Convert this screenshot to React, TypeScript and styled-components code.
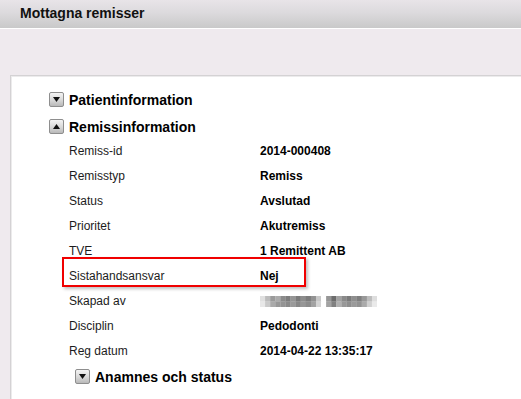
import React from "react";
import styled, { createGlobalStyle } from "styled-components";

const Global = createGlobalStyle`
  html, body { margin: 0; padding: 0; }
  body {
    background: #efeaee;
    font-family: "Liberation Sans", Arial, sans-serif;
    overflow: hidden;
  }
`;

const Page = styled.div`
  width: 521px;
  height: 399px;
  display: flex;
  flex-direction: column;
  overflow: hidden;
`;

const Header = styled.header`
  height: 29px;
  box-sizing: border-box;
  border-bottom: 1px solid #ffffff;
  padding-left: 20px;
  background: linear-gradient(#e8e4e8 0%, #dcdadd 45%, #c9c9c9 100%);
`;

const Title = styled.h1`
  margin: 0;
  font-size: 14px;
  font-weight: bold;
  line-height: 26px;
  color: #111;
`;

const Spacer = styled.div`
  height: 46px;
  flex: none;
`;

const Panel = styled.main`
  flex: 1;
  margin-left: 10px;
  background: #ffffff;
  border-top: 1px solid #d4d2d4;
  border-left: 1px solid #d4d2d4;
  box-shadow: inset 1px 1px 0 #ecebec;
  padding: 12px 0 0 38px;
`;

const SectionHead = styled.div<{ $indent?: number; $gap?: number; $top?: number }>`
  display: flex;
  align-items: center;
  height: 24px;
  margin-left: ${(p) => p.$indent ?? 0}px;
  margin-bottom: ${(p) => p.$gap ?? 0}px;
  margin-top: ${(p) => p.$top ?? 0}px;
  gap: 5px;
`;

const HeadText = styled.span`
  font-size: 14px;
  font-weight: bold;
  line-height: 24px;
  color: #000;
`;

const ToggleBtn = styled.span`
  width: 15px;
  height: 15px;
  box-sizing: border-box;
  border: 1px solid #8e8e8e;
  border-radius: 2px;
  background: linear-gradient(#f4f4f4 0%, #d8d8d8 55%, #b9b9b9 100%);
  display: flex;
  align-items: center;
  justify-content: center;
  flex: none;
  margin-top: -1px;
`;

const Toggle = ({ open }: { open?: boolean }) => (
  <ToggleBtn>
    <svg width="9" height="7" viewBox="0 0 9 7">
      {open ? (
        <polygon points="4.5,1 8,6 1,6" fill="#111" />
      ) : (
        <polygon points="1,1 8,1 4.5,6" fill="#111" />
      )}
    </svg>
  </ToggleBtn>
);

const Rows = styled.div`
  display: flex;
  flex-direction: column;
  margin-left: 20px;
`;

const Row = styled.div`
  position: relative;
  display: grid;
  grid-template-columns: 191px 1fr;
  height: 25px;
  font-size: 12px;
  line-height: 25px;
`;

const Label = styled.span`
  color: #1c1c1c;
`;

const Value = styled.span`
  color: #000;
  font-weight: bold;
  display: flex;
  align-items: center;
`;

const Highlight = styled.div`
  position: absolute;
  left: -7px;
  top: -7px;
  width: 244px;
  height: 30px;
  box-sizing: border-box;
  border: 2px solid #f00000;
  box-shadow: 2px 2px 3px rgba(0, 0, 0, 0.25);
  pointer-events: none;
`;

const blurCells: string[][] = [
  [
    "#e0e0e0", "#bcbcbc", "#9a9a9a", "#aaaaaa", "#8a8a8a", "#7c7c7c", "#949494", "#7a7a7a",
    "#8c8c8c", "#7c7c7c", "#929292", "#c8c8c8", "#fff", "#969696", "#6c6c6c", "#a2a2a2",
    "#8a8a8a", "#7a7a7a", "#8e8e8e", "#7e7e7e", "#989898", "#bcbcbc", "#dedede",
  ],
  [
    "#e8e8e8", "#cacaca", "#aaaaaa", "#989898", "#949494", "#8a8a8a", "#9a9a9a", "#888888",
    "#969696", "#8c8c8c", "#a2a2a2", "#d4d4d4", "#fff", "#a2a2a2", "#808080", "#b0b0b0",
    "#989898", "#8e8e8e", "#9a9a9a", "#929292", "#aaaaaa", "#d0d0d0", "#eaeaea",
  ],
];

const Blurred = () => (
  <svg width="117" height="11" viewBox="0 0 115 10" preserveAspectRatio="none">
    {blurCells.map((row, r) =>
      row.map((c, i) => (
        <rect key={`${r}-${i}`} x={i * 5} y={r * 5} width="5.2" height="5.2" fill={c} />
      ))
    )}
  </svg>
);

type Item = { label: string; value: React.ReactNode; highlight?: boolean };

const items: Item[] = [
  { label: "Remiss-id", value: "2014-000408" },
  { label: "Remisstyp", value: "Remiss" },
  { label: "Status", value: "Avslutad" },
  { label: "Prioritet", value: "Akutremiss" },
  { label: "TVE", value: "1 Remittent AB" },
  { label: "Sistahandsansvar", value: "Nej", highlight: true },
  { label: "Skapad av", value: <Blurred /> },
  { label: "Disciplin", value: "Pedodonti" },
  { label: "Reg datum", value: "2014-04-22 13:35:17" },
];

export default function App() {
  return (
    <Page>
      <Global />
      <Header>
        <Title>Mottagna remisser</Title>
      </Header>
      <Spacer />
      <Panel>
        <SectionHead $gap={3}>
          <Toggle />
          <HeadText>Patientinformation</HeadText>
        </SectionHead>
        <SectionHead>
          <Toggle open />
          <HeadText>Remissinformation</HeadText>
        </SectionHead>
        <Rows>
          {items.map((it) => (
            <Row key={it.label}>
              <Label>{it.label}</Label>
              <Value>{it.value}</Value>
              {it.highlight && <Highlight />}
            </Row>
          ))}
        </Rows>
        <SectionHead $indent={26} $top={1}>
          <Toggle />
          <HeadText>Anamnes och status</HeadText>
        </SectionHead>
      </Panel>
    </Page>
  );
}
